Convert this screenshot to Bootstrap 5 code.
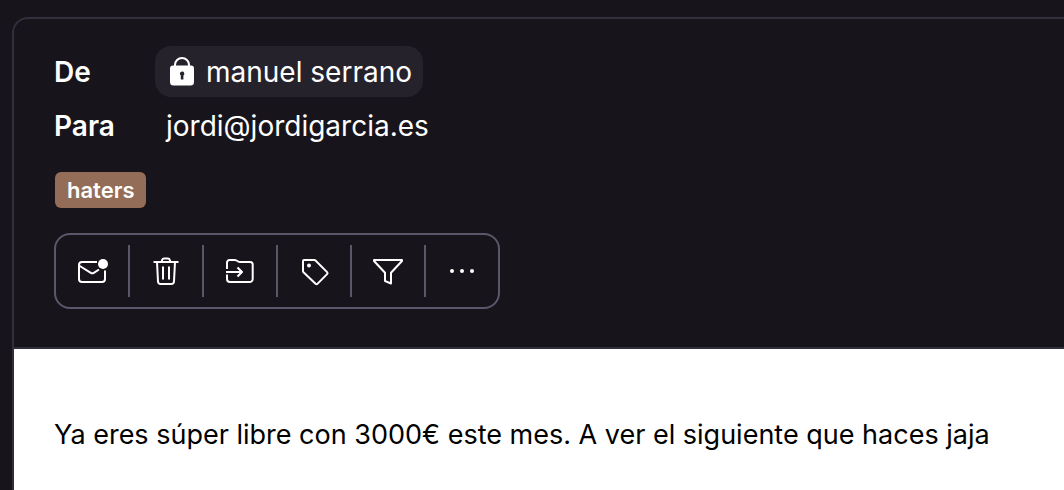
<!DOCTYPE html>
<html lang="es">
<head>
<meta charset="utf-8">
<meta name="viewport" content="width=device-width, initial-scale=1">
<title>Mensaje</title>
<link href="https://cdn.jsdelivr.net/npm/bootstrap@5.3.0/dist/css/bootstrap.min.css" rel="stylesheet">
<style>
  body { background: #17141b; color: #fff; font-family: Inter, "Liberation Sans", sans-serif; font-size: 28px; line-height: 34px; }
  .mail-shell { padding: 17px 0 0 12px; }
  .mail-frame { border: 2px solid #322f3d; border-width: 2px 0 0 2px; border-top-left-radius: 16px; }
  .mail-head { padding: 27px 40px 38px; border-bottom: 2px solid #322f3d; }
  .mail-label { width: 101px; font-weight: 600; }
  .sender-chip { background: #25222c; border-radius: 16px; padding: 8px 11px; gap: 12px; min-height: 51px; }
  .recipient { padding-left: 11px; }
  .tag-row { margin: 29px 1px 25px; }
  .tag-label { background: #936d58; border-radius: 6px; padding: 4px 12px; font-size: 22px; line-height: 28px; font-weight: 600; }
  .mail-tools { border: 2px solid #5b576b; border-radius: 16px; padding: 10px 0; }
  .mail-tools .btn { --bs-btn-color: #fff; --bs-btn-hover-color: #fff; --bs-btn-active-color: #fff; padding: 10px 20px; border: 0; border-radius: 0; line-height: 1; }
  .mail-tools .btn + .btn { border-left: 2px solid #5b576b; }
  .mail-tools svg { display: block; }
  .line-icon { fill: none; stroke: currentColor; stroke-width: 2; stroke-linejoin: round; }
  .mail-body { padding: 69px 40px 0; color: #000; font-size: 27px; }
</style>
</head>
<body>
<main class="mail-shell min-vh-100 d-flex flex-column">
  <article class="mail-frame flex-grow-1 d-flex flex-column overflow-hidden">
    <header class="mail-head">
      <div class="d-flex align-items-center">
        <span class="mail-label">De</span>
        <a href="#" class="sender-chip d-inline-flex align-items-center text-white text-decoration-none">
          <svg class="ms-1" width="24" height="30" viewBox="0 0 24 30" aria-hidden="true">
            <path d="M5 10V8a7 7 0 0 1 14 0v2" fill="none" stroke="#fff" stroke-width="2"/>
            <path fill="#fff" fill-rule="evenodd" d="M3 8.500h18a3 3 0 0 1 3 3V25a3.500 3.500 0 0 1-3.500 3.500h-17A3.500 3.500 0 0 1 0 25V11.500a3 3 0 0 1 3-3Zm9 6a2.200 2.200 0 0 0-1.200 4v4h2.600v-4a2.200 2.200 0 0 0-1.400-4Z"/>
          </svg>
          <span>manuel serrano</span>
        </a>
      </div>
      <div class="d-flex align-items-center mt-2 pt-1">
        <span class="mail-label">Para</span>
        <span class="recipient">jordi@jordigarcia.es</span>
      </div>
      <div class="tag-row d-flex"><span class="tag-label">haters</span></div>
      <div class="mail-tools d-inline-flex align-top" role="toolbar" aria-label="Acciones">
        <button type="button" class="btn" aria-label="Marcar como no leído">
          <svg class="line-icon" width="32" height="32" viewBox="0 0 32 32"><path d="M21 7H6a3 3 0 0 0-3 3v14a3 3 0 0 0 3 3h20a3 3 0 0 0 3-3v-8.500M3 10.500l11.800 7.300q1.500 1 3 0l5.200-3.300"/><circle cx="27" cy="9" r="5" fill="currentColor" stroke="none"/></svg>
        </button>
        <button type="button" class="btn" aria-label="Eliminar">
          <svg class="line-icon" width="32" height="32" viewBox="0 0 32 32"><path d="M3.500 7h25M11.500 7l.8-2.300Q12.700 3.500 14 3.500h4q1.300 0 1.700 1.200l.8 2.300M7 7l1 19.500A2.700 2.700 0 0 0 10.700 29h10.600a2.700 2.700 0 0 0 2.700-2.500L25 7M13 11.500v13M19 11.500v13"/></svg>
        </button>
        <button type="button" class="btn" aria-label="Mover a">
          <svg class="line-icon" width="32" height="32" viewBox="0 0 32 32"><path d="M3 14V7.500A2.500 2.500 0 0 1 5.500 5h5.200q1 0 1.800.5l1.700 1q.8.500 1.800.5h10.200A2.500 2.500 0 0 1 28.700 9.500V24a3 3 0 0 1-3 3H6a3 3 0 0 1-3-3v-4.500M2 17h16M13.500 12.500 18 17l-4.500 4.500"/></svg>
        </button>
        <button type="button" class="btn" aria-label="Etiquetar">
          <svg class="line-icon" width="32" height="32" viewBox="0 0 32 32"><path d="M5 6a1 1 0 0 1 1-1h10.300q.7 0 1.200.5l11.600 11.600q1 1 0 2l-9.700 9.800q-.8.800-1.600 0L5.500 17.300q-.5-.5-.5-1.200Z"/><circle cx="11" cy="10.500" r="2" fill="currentColor" stroke="none"/></svg>
        </button>
        <button type="button" class="btn" aria-label="Filtrar">
          <svg class="line-icon" width="32" height="32" viewBox="0 0 32 32"><path d="M2 5h28v1L19 17.700v10.800l-6-2.500v-8.300L2 6Z"/></svg>
        </button>
        <button type="button" class="btn" aria-label="Más acciones">
          <svg width="32" height="32" viewBox="0 0 32 32" fill="currentColor"><circle cx="6" cy="16" r="2"/><circle cx="16" cy="16" r="2"/><circle cx="26" cy="16" r="2"/></svg>
        </button>
      </div>
    </header>
    <section class="mail-body bg-white flex-grow-1"><p class="mb-0">Ya eres súper libre con 3000€ este mes. A ver el siguiente que haces jaja</p></section>
  </article>
</main>
<script src="https://cdn.jsdelivr.net/npm/bootstrap@5.3.0/dist/js/bootstrap.bundle.min.js"></script>
</body>
</html>
